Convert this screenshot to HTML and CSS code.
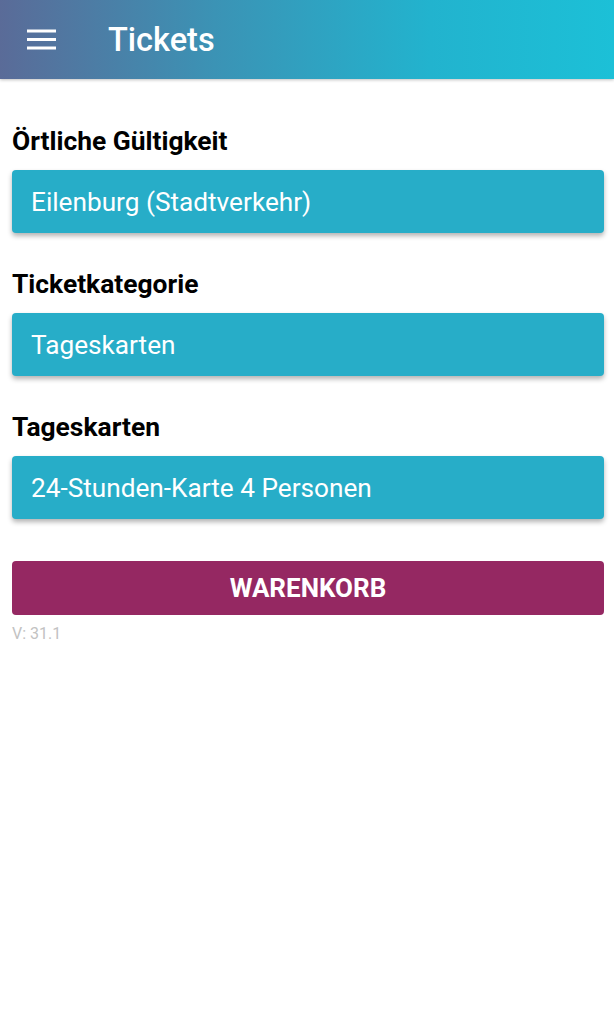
FILE: index.html
```html
<!DOCTYPE html>
<html lang="de">
<head>
  <meta charset="UTF-8">
  <title>Tickets</title>
  <link rel="stylesheet" href="styles.css">
</head>
<body>
  <header class="toolbar">
    <svg class="menu-icon" width="30" height="22" viewBox="0 0 30 22">
      <rect x="0" y="0.5" width="29" height="3" fill="#fff"/>
      <rect x="0" y="9" width="29" height="3" fill="#fff"/>
      <rect x="0" y="17.5" width="29" height="3" fill="#fff"/>
    </svg>
    <h1 class="title">Tickets</h1>
  </header>
  <main class="content">
    <div class="group">
      <div class="label">Örtliche Gültigkeit</div>
      <div class="select">Eilenburg (Stadtverkehr)</div>
    </div>
    <div class="group">
      <div class="label">Ticketkategorie</div>
      <div class="select">Tageskarten</div>
    </div>
    <div class="group">
      <div class="label">Tageskarten</div>
      <div class="select">24-Stunden-Karte 4 Personen</div>
    </div>
    <button class="cart-btn">WARENKORB</button>
    <div class="version">V: 31.1</div>
  </main>
</body>
</html>
```

FILE: styles.css
```css
body {
  margin: 0;
  font-family: Roboto, "Noto Sans", sans-serif;
  background: #fff;
}
.toolbar {
  height: 79px;
  display: flex;
  align-items: center;
  padding-left: 27px;
  background: linear-gradient(to right, #5a6b98, #3b93b5 35%, #22b3ce 70%, #1cc0d7);
  box-shadow: 0 1px 3px rgba(0,0,0,0.25);
}
.menu-icon {
  display: block;
}
.title {
  margin: 2px 0 0 51px;
  color: #fff;
  font-size: 32.5px;
  font-weight: 500;
  line-height: 1;
}
.content {
  padding: 0 10px 0 12px;
}
.group {
  padding-top: 47px;
}
.group + .group {
  padding-top: 36px;
}
.label {
  font-size: 26.4px;
  font-weight: 700;
  color: #000;
  line-height: 30px;
  margin-bottom: 14px;
}
.select {
  height: 63px;
  box-sizing: border-box;
  background: #27adc8;
  border-radius: 4px;
  color: #fff;
  font-size: 26.2px;
  padding-left: 19px;
  display: flex;
  align-items: center;
  box-shadow: 0 3px 5px rgba(0,0,0,0.3);
}
.cart-btn {
  display: block;
  width: 100%;
  height: 54px;
  margin-top: 42px;
  border: none;
  border-radius: 4px;
  background: #952862;
  color: #fff;
  font-family: Roboto, sans-serif;
  font-size: 26px;
  font-weight: 700;
}
.version {
  margin-top: 9px;
  font-size: 16px;
  color: #c2c2c2;
}
```
